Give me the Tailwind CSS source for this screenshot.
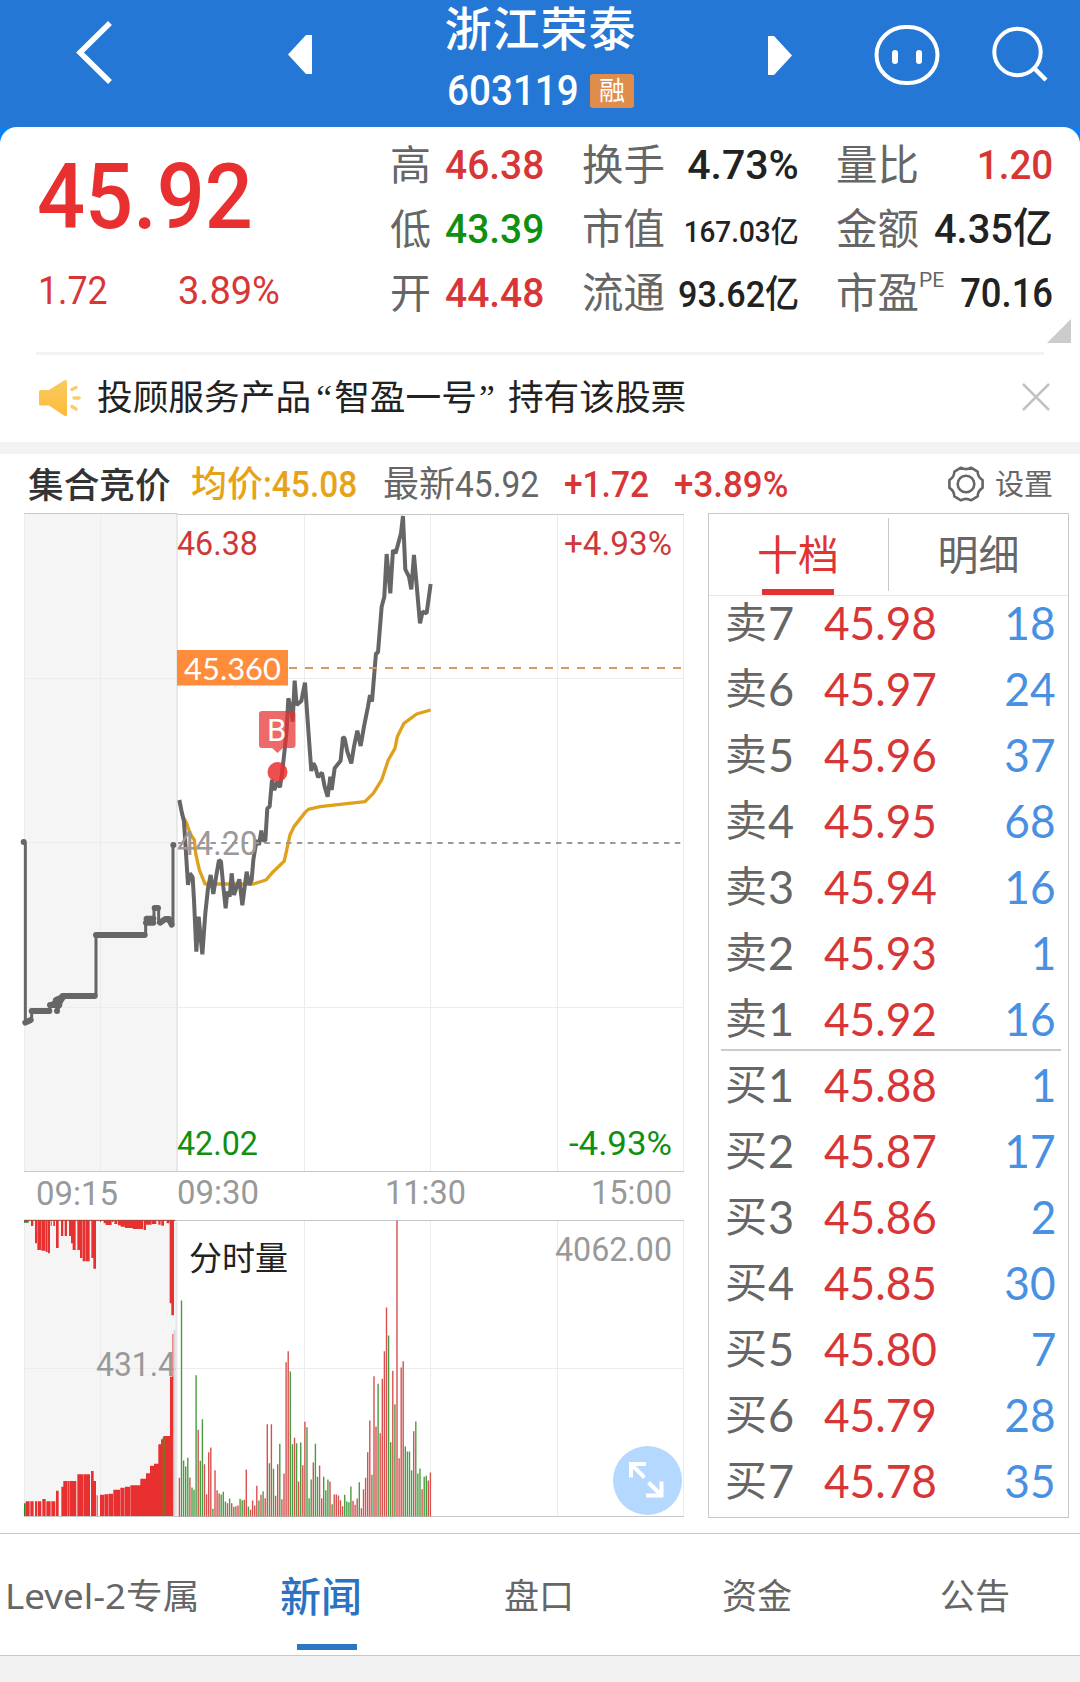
<!DOCTYPE html>
<html lang="zh-CN">
	<head>
		<meta charset="UTF-8" />
		<meta name="viewport" content="width=device-width, initial-scale=1.0" />
		<script src="https://cdn.jsdelivr.net/npm/@tailwindcss/browser@4"></script>
		<title>浙江荣泰 603119</title>
	</head>
	<body class="bg-[#f2f2f2] [font-family:Roboto,'Noto_Sans_CJK_SC',sans-serif]">
		<div class="w-[1080px] h-[1682px] overflow-hidden flex flex-col whitespace-nowrap">
			<!-- Header -->
			<header class="h-[127px] shrink-0 bg-[#2477d4] flex text-white">
				<svg class="w-[440px] h-[127px] shrink-0" viewBox="0 0 440 127" fill="none">
					<path d="M110 23L80 52.5L110 82" stroke="#fff" stroke-width="5.5" />
					<path d="M288 54.5L306 35H312V74H306Z" fill="#fff" />
				</svg>
				<div class="w-[200px] shrink-0 flex flex-col items-center">
					<h1 class="h-[58px] leading-[60px] pl-px text-[47px] font-medium tracking-[1px]">浙江荣泰</h1>
					<div class="w-full h-[66px] flex items-center pl-[7px]">
						<span class="w-[143px] origin-left scale-x-[0.92] text-[42px] font-medium leading-[68px]">603119</span>
						<span class="w-[44px] h-[34px] rounded-[3px] bg-[#e08c4a] text-[26px] leading-[35px] text-center">融</span>
					</div>
				</div>
				<svg class="w-[440px] h-[127px] shrink-0" viewBox="640 0 440 127" fill="none">
					<path d="M792 55.500L774 36H768V75H774Z" fill="#fff" />
					<rect x="876.500" y="27" width="61" height="56" rx="29" stroke="#fff" stroke-width="4" />
					<path d="M895 53V61M919 53V61" stroke="#fff" stroke-width="6" stroke-linecap="round" />
					<circle cx="1017.500" cy="52" r="23.200" stroke="#fff" stroke-width="4" />
					<path d="M1034 68L1046 80" stroke="#fff" stroke-width="4.500" />
				</svg>
			</header>

			<!-- Quote -->
			<div class="bg-[#0a80f5] shrink-0">
				<section class="relative h-[225px] bg-white rounded-t-[17px] flex pt-[5px]">
					<div class="w-[390px] shrink-0 pl-[37px] text-[#e83030]">
						<div class="h-[128px] leading-[130px] text-[91px] font-medium origin-left scale-x-[0.93]">45.92</div>
						<div class="flex h-[60px] leading-[62px] text-[38px] text-[#d83636]">
							<span class="w-[141px] pl-px origin-left scale-x-[0.94]">1.72</span>
							<span class="origin-left scale-x-[1]">3.89%</span>
						</div>
					</div>
					<div class="w-[154px] shrink-0 text-[41px] leading-[66px] text-[#666]">
						<div class="h-[64px] flex"><span class="w-[55px] shrink-0 leading-[68px]">高</span><span class="origin-left scale-x-[0.95] font-medium text-[#d83636]">46.38</span></div>
						<div class="h-[64px] flex"><span class="w-[55px] shrink-0 leading-[68px]">低</span><span class="origin-left scale-x-[0.95] font-medium text-[#109010]">43.39</span></div>
						<div class="h-[64px] flex"><span class="w-[55px] shrink-0 leading-[68px]">开</span><span class="origin-left scale-x-[0.95] font-medium text-[#d83636]">44.48</span></div>
					</div>
					<div class="w-[217px] ml-[38px] shrink-0 text-[41.500px] leading-[66px] text-[#666]">
						<div class="h-[64px] flex justify-between"><span class="leading-[68px]">换手</span><span class="origin-right scale-x-[0.99] font-medium text-[#222]">4.73%</span></div>
						<div class="h-[64px] flex justify-between"><span class="leading-[68px]">市值</span><span class="origin-right scale-x-[0.93] text-[30px] leading-[72px] font-medium text-[#222]">167.03亿</span></div>
						<div class="h-[64px] flex justify-between"><span class="leading-[68px]">流通</span><span class="origin-right scale-x-[0.91] text-[37.500px] leading-[68px] font-medium text-[#222]">93.62亿</span></div>
					</div>
					<div class="w-[217px] ml-[37px] shrink-0 text-[41.500px] leading-[66px] text-[#666]">
						<div class="h-[64px] flex justify-between"><span class="leading-[68px]">量比</span><span class="origin-right scale-x-[0.93] font-medium text-[#d83636]">1.20</span></div>
						<div class="h-[64px] flex justify-between"><span class="leading-[68px]">金额</span><span class="origin-right scale-x-[0.96] font-medium text-[#222]">4.35亿</span></div>
						<div class="h-[64px] flex justify-between"><span class="flex leading-[68px]">市盈<span class="text-[21px] leading-[40px]">PE</span></span><span class="origin-right scale-x-[0.91] text-[40px] leading-[67px] font-medium text-[#222]">70.16</span></div>
					</div>
					<svg class="absolute right-[9px] bottom-[9px] w-6 h-6" viewBox="0 0 24 24"><path d="M24 0V24H0Z" fill="#ccc" /></svg>
				</section>
			</div>

			<!-- Notice -->
			<section class="h-[90px] shrink-0 bg-white px-9">
				<div class="h-[3px] bg-[#f3f3f3]"></div>
				<div class="h-[87px] flex items-center text-[35.700px] leading-[91px] text-[#222]">
					<svg class="w-[46px] h-[40px] mr-[15px] -mt-[2px] shrink-0" viewBox="36 377 46 40">
						<defs>
							<linearGradient id="horn" x1="0" y1="0" x2="0" y2="1">
								<stop offset="0" stop-color="#f7cc62" />
								<stop offset="1" stop-color="#ffb93a" />
							</linearGradient>
						</defs>
						<path d="M40.500 389H49L64 379.500Q67 378 67 381V413Q67 416.500 64 414.500L49 404.500H40.500Q39 404.500 39 403V390.500Q39 389 40.500 389Z" fill="url(#horn)" />
						<path d="M72 388.500L76 386.500M74 397H79M72 405.500L76 408" stroke="#fbcd6a" stroke-width="3.500" stroke-linecap="round" />
					</svg>
					<span>投顾服务产品</span>
					<span class="w-[23px] pr-[2px] text-right [font-family:'Liberation_Serif',serif]">“</span>
					<span>智盈一号</span>
					<span class="w-[31px] pl-[2px] [font-family:'Liberation_Serif',serif]">”</span>
					<span>持有该股票</span>
					<svg class="w-[28px] h-[28px] ml-auto -mr-1.5 -mt-[3px]" viewBox="0 0 28 28"><path d="M1 1L27 27M27 1L1 27" stroke="#c2c2c2" stroke-width="2.500" /></svg>
				</div>
			</section>
			<div class="h-3 shrink-0 bg-[#f3f3f3]"></div>

			<!-- Chart summary -->
			<section class="h-[59px] shrink-0 bg-white flex text-[36px] leading-[63px] font-medium">
				<span class="w-[163px] ml-[28px] text-[#333] text-[35.700px] leading-[64px]">集合竞价</span>
				<span class="w-[192px] flex text-[#e6a317]">均价<span class="origin-left scale-x-[0.93]">:45.08</span></span>
				<span class="w-[181px] flex text-[#666] font-normal">最新<span class="origin-left scale-x-[0.93]">45.92</span></span>
				<span class="w-[110px] origin-left scale-x-[0.93] text-[#d83636]">+1.72</span>
				<span class="w-[273px] text-[#d83636]"><span class="inline-block origin-left scale-x-[0.97]">+3.89%</span></span>
				<svg class="w-[38px] h-[38px] mt-[11px] shrink-0" viewBox="-19 -19 38 38" fill="none" stroke="#666" stroke-width="2.600" stroke-linejoin="round">
					<path d="M16.600 -3.800L16.600 3.800Q11.700 6.750 11.600 12.400L5 16.300Q0 13.500 -5 16.300L-11.600 12.400Q-11.700 6.750 -16.600 3.800L-16.600 -3.800Q-11.700 -6.750 -11.600 -12.400L-5 -16.300Q0 -13.500 5 -16.300L11.600 -12.400Q11.700 -6.750 16.600 -3.800Z" />
					<circle r="8.300" />
				</svg>
				<span class="ml-[10px] text-[29px] font-normal text-[#666]">设置</span>
			</section>

			<main class="h-[1020px] shrink-0 bg-white flex">
				<!-- Intraday chart -->
				<svg class="w-[708px] h-[1010px] shrink-0" viewBox="0 513 708 1010" fill="none">
					<rect x="24" y="513" width="152" height="658" fill="#f5f5f5" />
					<rect x="24" y="1220" width="152" height="296" fill="#f5f5f5" />
					<path d="M24.500 513V1171M100.500 513V1171M304.500 514V1171M430.500 514V1171M557.500 514V1171M683.500 514V1171M24 678.500H683M24 842.500H176M24 1007.500H683M24.500 1220V1516M100.500 1220V1516M304.500 1220V1516M430.500 1220V1516M557.500 1220V1516M683.500 1220V1516M24 1368.500H683" stroke="#ececec" />
					<path d="M177 513V1171M176.500 1220V1516" stroke="#e8e8e8" stroke-width="2" />
					<path d="M24 513.500H177M177 514.500H684M24 1171.500H684M24 1220.500H684M24 1516.500H684" stroke="#c8c8c8" />

					<g font-size="33" fill="#999">
						<text x="177" y="555" textLength="81" lengthAdjust="spacingAndGlyphs" fill="#cf3838">46.38</text>
						<text x="564" y="555" textLength="108" lengthAdjust="spacingAndGlyphs" fill="#cf3838">+4.93%</text>
						<text x="177" y="1155" textLength="81" lengthAdjust="spacingAndGlyphs" fill="#109010">42.02</text>
						<text x="569" y="1155" textLength="103" lengthAdjust="spacingAndGlyphs" fill="#109010">-4.93%</text>
						<text x="36" y="1205" textLength="82" lengthAdjust="spacingAndGlyphs">09:15</text>
						<text x="177" y="1204" textLength="82" lengthAdjust="spacingAndGlyphs">09:30</text>
						<text x="385" y="1204" textLength="81" lengthAdjust="spacingAndGlyphs">11:30</text>
						<text x="591" y="1204" textLength="81" lengthAdjust="spacingAndGlyphs">15:00</text>
						<text x="555" y="1261" textLength="117" lengthAdjust="spacingAndGlyphs">4062.00</text>
						<text x="189" y="1270" fill="#222">分时量</text>
					</g>

					<!-- opening auction -->
					<g transform="translate(0 820) scale(0.3333)" stroke="#666" stroke-linecap="round" stroke-linejoin="round">
						<path d="M71 66L76 70V608L95 600V573H150V555L168 540L171 573L182 553V528H288V345H437V308L440 296H462V264H476V308L496 296L515 315L519 310V75" stroke-width="9" />
						<path d="M76 608L92 600M95 573H148M150 555H178M168 540L190 530L180 545M188 528H284M288 345H434M438 308H460L440 296H460M464 264H474M480 308L496 297H508L515 314M71 66h.1M171 573h.1M520 75h.1" stroke-width="18" />
					</g>

					<!-- average and last price -->
					<g transform="translate(160 640) scale(0.3333)">
						<path d="M64 520L80 550L90 580L103 600L107 640L118 690L135 732H280L318 720L335 700L373 663L390 585L402 560L435 518L445 508L480 500L615 485L640 460L665 420L685 360L705 325L712 290L732 250L770 222L812 210" stroke="#e0a01c" stroke-width="10" stroke-linejoin="round" />
						<path d="M58 480L66 520L72 545L78 640L84 735L90 700L98 712L102 780L109 935L116 830L127 943L136 820L144 745L152 705L160 762L170 700L177 660L183 665L190 740L197 805L202 755L209 770L215 700L222 765L232 735L238 718L247 796L260 695L268 735L275 720L280 660L290 600L297 615L304 572L308 600L316 603L322 505L329 500L336 420L343 450L352 425L360 442L366 400L374 330L380 270L385 175L393 205L398 245L404 122L410 195L424 183L435 128L445 270L454 393L460 370L466 380L474 412L486 398L494 440L503 470L511 410L515 450L524 385L542 362L549 292L554 295L562 335L574 370L582 320L592 272L602 318L612 260L624 200L630 165L636 185L648 40L654 38L665 -100L673 -130L680 -258L691 -140L699 -270L707 -260L723 -320L729 -372L736 -212L747 -190L754 -152L762 -255L770 -165L780 -50L788 -85L800 -80L812 -168" stroke="#666" stroke-width="12" stroke-linejoin="bevel" />
					</g>
					<path d="M178 843H683" stroke="#999" stroke-width="2" stroke-dasharray="5.500 5.300" />
					<text x="177" y="855" font-size="33" textLength="81" lengthAdjust="spacingAndGlyphs" fill="#999">44.20</text>

					<path d="M289 668H683" stroke="#d39a58" stroke-width="2" stroke-dasharray="8 8" />
					<rect x="177" y="650" width="111" height="35.500" fill="#ff8c3a" />
					<text x="184" y="679.500" font-size="31" textLength="97" lengthAdjust="spacingAndGlyphs" fill="#fff" class="[font-family:Lato,sans-serif]">45.360</text>
					<path d="M262 711H292.500Q295.500 711 295.500 714V745Q295.500 748 292.500 748H283L277.500 753L272 748H262Q259 748 259 745V714Q259 711 262 711Z" fill="#e83030" fill-opacity="0.720" />
					<text x="267" y="741" font-size="31" fill="#fff">B</text>
					<circle cx="277.500" cy="772" r="10" fill="#e83030" fill-opacity="0.850" />

					<!-- volume -->
					<text x="96" y="1376" font-size="33" textLength="80" lengthAdjust="spacingAndGlyphs" fill="#999">431.4</text>
					<path d="M174.500 1330V1516" stroke="#d8d8d8" stroke-width="2" />
					<path d="M172.800 1334V1380" stroke="#ee8080" stroke-width="1.500" />
					<g transform="translate(0 1200) scale(0.3333)">
						<path id="auctionVolume" fill="#e83030" />
						<path d="M72 61H86V68H72ZM72 910H77V948H72Z" fill="#209020" />
						<path d="M488 712H497V948H488Z" fill="#8a6a20" />
						<path d="M72 61H526" stroke="#a84030" stroke-width="3" />
					</g>
					<path id="volumeUp" stroke="#d85050" stroke-width="1.400" />
					<path id="volumeDown" stroke="#4a9c40" stroke-width="1.400" />

					<circle cx="647.500" cy="1480.500" r="34.500" fill="#b5d8ff" />
					<path d="M646 1464H631V1477.500M631 1464L644.500 1477.500M646 1495.500H661.500V1481.500M661.500 1495.500L648.500 1482.500" stroke="#fff" stroke-width="4" />
				</svg>

				<!-- Order book -->
				<aside class="w-[361px] h-[1005px] border border-[#c8c8c8] shrink-0">
					<div class="h-[82px] flex border-b border-[#e8e8e8] text-[41px] leading-[84px]">
						<div class="w-[180px] flex flex-col items-center pr-[2px] text-[#e03434]">
							<span class="h-[75px]">十档</span>
							<span class="w-[72px] h-[6px] bg-[#e43232]"></span>
						</div>
						<div class="flex-1 my-1 -ml-px border-l border-[#c8c8c8] text-center leading-[76px] text-[#666]">明细</div>
					</div>
					<div id="orderBook" class="-mt-1.5"></div>
				</aside>
			</main>

			<!-- Tabs -->
			<nav class="h-[123px] shrink-0 bg-white border-y border-[#c8c8c8] grid grid-cols-[212px_218px_218px_218px_218px] text-[35px] leading-[124px] text-[#666] text-center [font-family:'Noto_Sans','Noto_Sans_CJK_SC',sans-serif]">
				<span class="text-left pl-[5px]"><span class="inline-block origin-left scale-x-[1.05]">Level-2专属</span></span>
				<span class="relative text-[41px] font-medium text-[#2b73c2]">新闻<i class="absolute left-[85px] bottom-[8px] w-[60px] h-[6px] bg-[#2c76c4]"></i></span>
				<span>盘口</span>
				<span>资金</span>
				<span>公告</span>
			</nav>
		</div>

		<script>
			const orders = [
				['卖7', '45.98', 18], ['卖6', '45.97', 24], ['卖5', '45.96', 37], ['卖4', '45.95', 68], ['卖3', '45.94', 16], ['卖2', '45.93', 1], ['卖1', '45.92', 16],
				['买1', '45.88', 1], ['买2', '45.87', 17], ['买3', '45.86', 2], ['买4', '45.85', 30], ['买5', '45.80', 7], ['买6', '45.79', 28], ['买7', '45.78', 35],
			];
			document.getElementById('orderBook').innerHTML = orders
				.map(([side, price, lots], i) => `
					<div class="h-[66px] flex leading-[64px] text-[47px] pl-[16px] pr-[12px] [font-family:Lato,'Noto_Sans_CJK_SC',sans-serif]">
						<span class="w-[99px] flex text-[#666]"><span class="w-[43px] text-[42px]">${side[0]}</span><span class="origin-left scale-x-[0.96]">${side[1]}</span></span>
						<span class="origin-left scale-x-[0.94] text-[#d83636]">${price}</span>
						<span class="ml-auto origin-right scale-x-[0.94] text-[#4a90e2]">${lots}</span>
					</div>${i === 6 ? '<div class="h-[2px] -mt-[3px] mb-px ml-[12px] mr-[7px] bg-[#ccc]"></div>' : ''}`)
				.join('');

			// one bar per minute, u = up, d = down, value is bar height
			const volume = 'u116 d648 d168 d150 d176 u117 d87 d80 d424 u260 d167 d292 u157 u67 u193 u207 d23 u139 u79 u69 d66 d74 d45 u40 d54 u40 d29 u31 u33 d53 d49 u50 u141 d30 u20 u48 u33 u92 d48 u65 d76 u55 u277 d160 u277 d143 u62 u157 d218 u52 u129 u463 u496 d435 d217 u236 d220 u105 d222 u154 u284 d268 d55 d111 u162 d218 d119 u153 u55 d119 d79 d111 u105 d37 u66 u66 u63 u49 u31 d65 d45 d43 d90 u47 u35 u54 d103 u25 u82 u116 u193 u288 d125 u421 u270 d398 u250 u413 u496 u627 d543 d223 u437 d337 u888 u175 u447 u466 d210 d195 d195 d139 u256 d285 d129 d144 u82 d119 d122 u108 u132'.split(' ');
			const bars = { u: '', d: '' };
			volume.forEach((v, i) => {
				bars[v[0]] += `M${(179.400 + i * 2.092).toFixed(1)} 1516.500v${(-v.slice(1) / 3).toFixed(1)}`;
			});
			document.getElementById('volumeUp').setAttribute('d', bars.u);
			document.getElementById('volumeDown').setAttribute('d', bars.d);

			// [from, to, edge]
			const upper = [[93, 100, 78], [105, 111, 130], [112, 123, 150], [124, 136, 152], [137, 143, 156], [144, 150, 160], [152, 155, 78], [160, 165, 78], [168, 176, 144], [183, 190, 108], [194, 201, 108], [207, 213, 108], [213, 218, 130], [218, 227, 150], [232, 240, 150], [240, 247, 174], [248, 256, 184], [257, 269, 184], [274, 280, 174], [280, 288, 206], [300, 303, 66], [311, 317, 70], [317, 335, 75], [336, 340, 66], [343, 352, 72], [354, 362, 76], [362, 375, 80], [375, 398, 84], [398, 429, 87], [431, 438, 90], [438, 455, 74], [456, 469, 72], [475, 482, 74], [484, 492, 77], [500, 508, 70], [509, 515, 310], [514, 522, 346]];
			const lower = [[77, 89, 904], [91, 101, 904], [105, 112, 904], [114, 124, 904], [127, 137, 897], [139, 152, 904], [154, 166, 904], [168, 176, 872], [184, 190, 860], [190, 201, 843], [202, 208, 843], [209, 229, 843], [232, 251, 823], [252, 270, 823], [273, 281, 813], [281, 288, 843], [290, 293, 886], [300, 312, 884], [313, 325, 883], [326, 339, 881], [340, 360, 869], [361, 374, 863], [375, 390, 860], [391, 421, 856], [421, 438, 836], [438, 450, 820], [450, 462, 797], [462, 475, 791], [475, 483, 733], [483, 490, 718], [490, 510, 708], [510, 520, 530]];
			document.getElementById('auctionVolume').setAttribute('d',
				upper.map(([a, b, y]) => `M${a} 61H${b}V${y}H${a}Z`).join('') + lower.map(([a, b, y]) => `M${a} 948H${b}V${y}H${a}Z`).join(''));
		</script>
	</body>
</html>
